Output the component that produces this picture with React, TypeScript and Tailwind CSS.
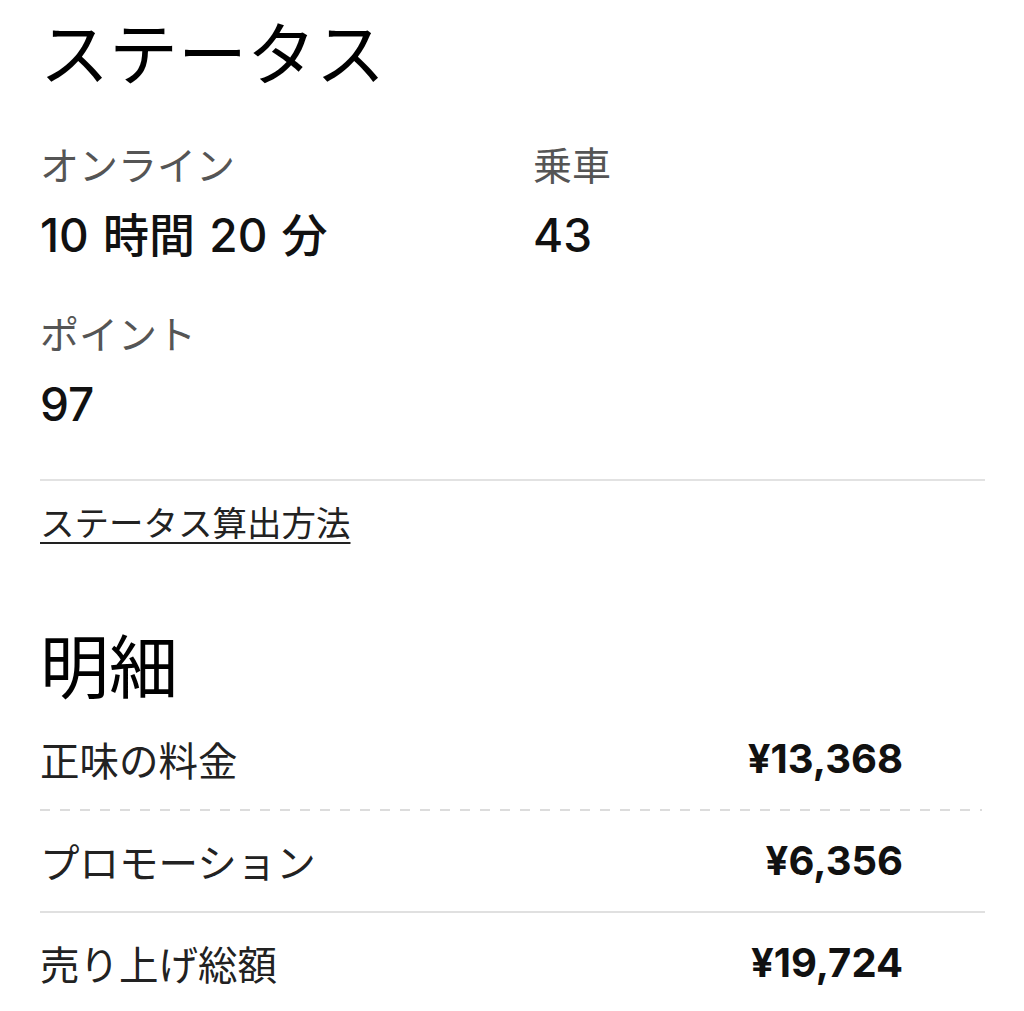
import React from "react";

const jp = "font-['Inter','Noto_Sans_CJK_JP',sans-serif]";

const stats = [
  { label: "オンライン", value: "10 時間 20 分" },
  { label: "乗車", value: "43" },
  { label: "ポイント", value: "97" },
];

const rows = [
  { label: "正味の料金", amount: "¥13,368", line: "dashed" },
  { label: "プロモーション", amount: "¥6,356", line: "solid" },
  { label: "売り上げ総額", amount: "¥19,724", line: "none" },
];

export default function App() {
  return (
    <div className={`min-h-[1011px] bg-white text-black pl-[40px] pr-[39px] ${jp}`}>
      {/* Status */}
      <h1 className="pt-[10px] text-[69px] leading-[80px] font-normal font-['Noto_Sans_CJK_JP',sans-serif]">
        ステータス
      </h1>

      <div className="mt-[53px] grid grid-cols-[493px_1fr] gap-y-[53px]">
        {stats.map((s) => (
          <div key={s.label} className="flex flex-col gap-[28px]">
            <div className="text-[39px] leading-[40px] text-[#555] font-['Noto_Sans_CJK_JP',sans-serif]">
              {s.label}
            </div>
            <div className="text-[46px] leading-[48px] font-medium text-[#111] [word-spacing:2px]">
              {s.value}
            </div>
          </div>
        ))}
      </div>

      <div className="mt-[51px] h-[2px] bg-[#e2e2e2]" />

      <a
        href="#"
        className="mt-[20px] inline-block text-[34.5px] leading-[40px] text-[#222] underline decoration-2 underline-offset-[6px] font-['Noto_Sans_CJK_JP',sans-serif]"
      >
        ステータス算出方法
      </a>

      {/* Breakdown */}
      <h2 className="mt-[81px] text-[69px] leading-[80px] font-normal font-['Noto_Sans_CJK_JP',sans-serif]">
        明細
      </h2>

      <div className="mt-[6px]">
        {rows.map((r) => (
          <div key={r.label}>
            <div className="flex h-[100px] items-center justify-between pr-[82px]">
              <span className="text-[39.5px] text-[#222] font-['Noto_Sans_CJK_JP',sans-serif]">
                {r.label}
              </span>
              <span className="text-[40px] font-bold text-[#111]">{r.amount}</span>
            </div>
            {r.line === "dashed" && (
              <div className="mr-[3px] h-[2px] bg-[linear-gradient(to_right,#dcdcdc_50%,transparent_50%)] bg-[length:20px_2px] bg-repeat-x" />
            )}
            {r.line === "solid" && <div className="h-[2px] bg-[#e0e0e0]" />}
          </div>
        ))}
      </div>
    </div>
  );
}
